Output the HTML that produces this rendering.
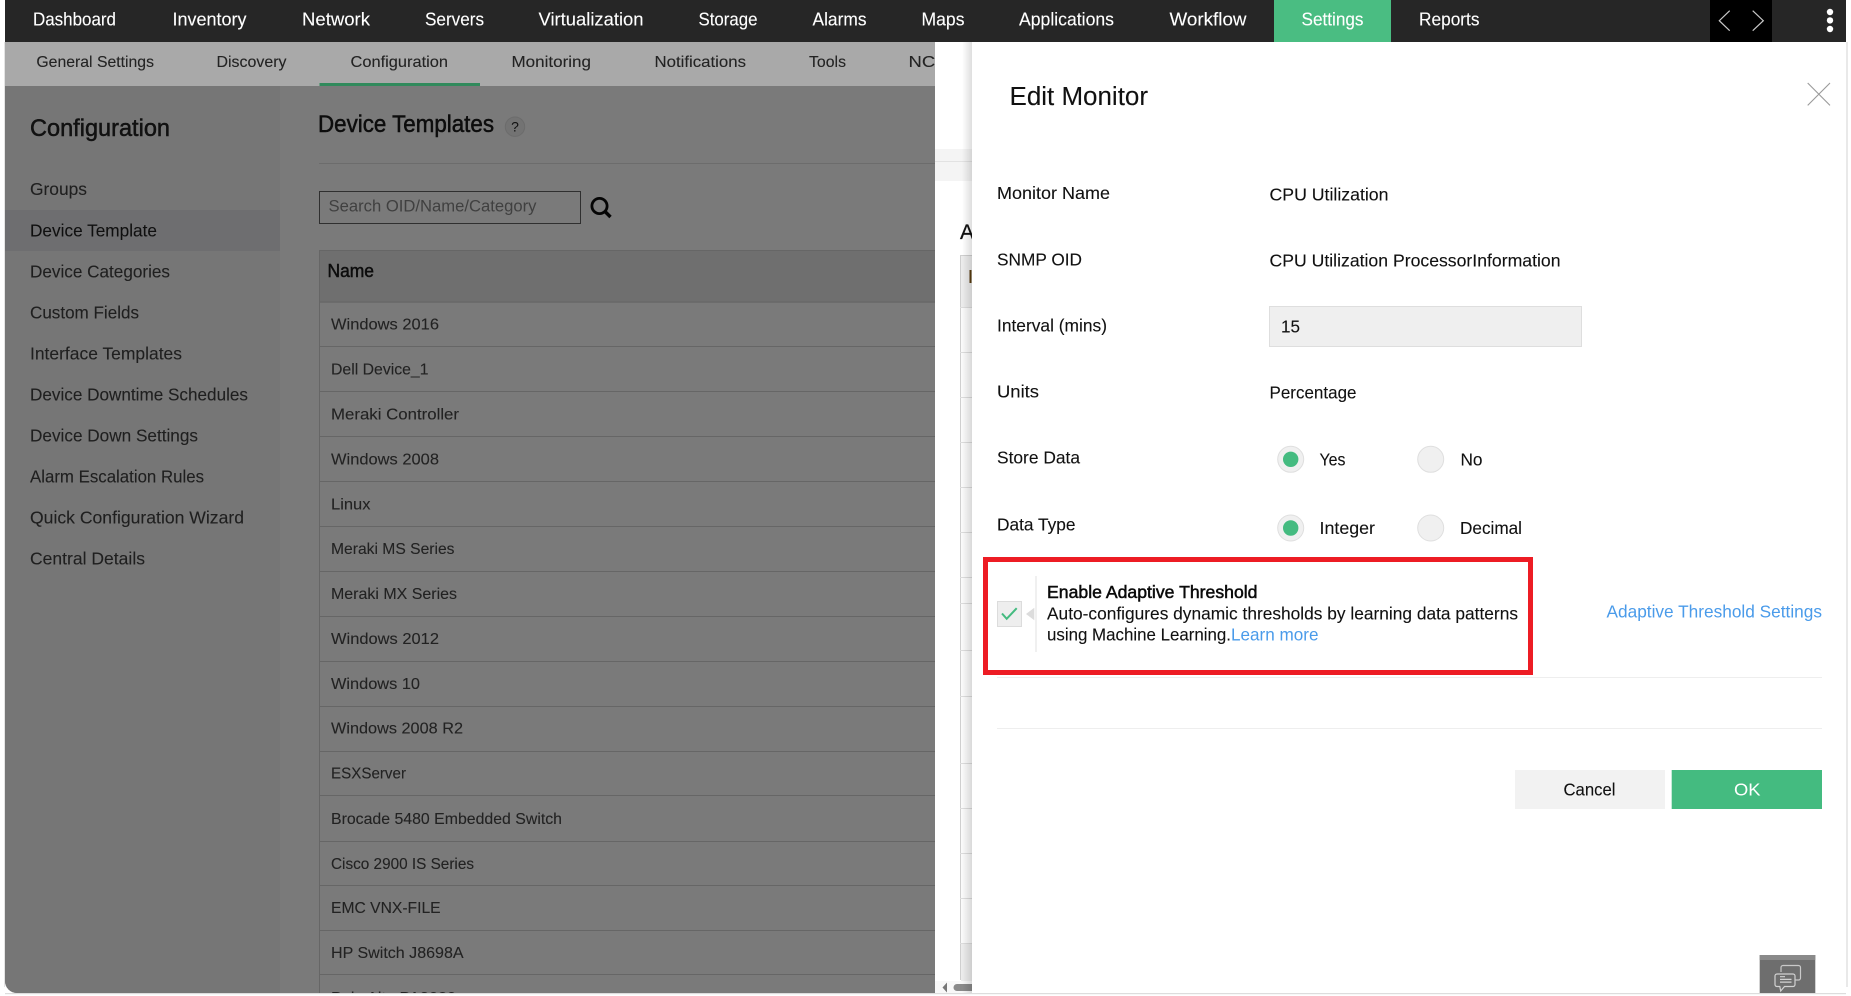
<!DOCTYPE html>
<html><head><meta charset="utf-8"><title>Edit Monitor</title>
<style>
html,body{margin:0;padding:0;width:1851px;height:996px;overflow:hidden;background:#fff}
svg{display:block}
text{font-family:"Liberation Sans",sans-serif}
.n{font-size:18px;fill:#fff;stroke:#fff;stroke-width:.1}
.s{font-size:16px;fill:#232323;stroke:#232323;stroke-width:.1}
.m{font-size:17.8px;fill:#1f1f1f;stroke:#1f1f1f;stroke-width:.1}
.r{font-size:16px;fill:#222;stroke:#222;stroke-width:.1}
.p{font-size:17.8px;fill:#111;stroke:#111;stroke-width:.1}
.a{font-size:17.8px;fill:#4a9bea}
</style></head><body>
<svg xmlns="http://www.w3.org/2000/svg" width="1851" height="996" viewBox="0 0 1851 996">
<defs>
<clipPath id="pg"><path d="M5 0H1846V981a12 12 0 0 1-12 12H17a12 12 0 0 1-12-12Z"/></clipPath>
<linearGradient id="sh" x1="0" x2="1" y1="0" y2="0"><stop offset="0" stop-color="#000" stop-opacity="0"/><stop offset="1" stop-color="#000" stop-opacity=".13"/></linearGradient>
</defs>
<rect x="5" y="993" width="1841" height="1.2" fill="#ddd"/>
<rect x="1846" y="42" width="2" height="945" fill="#e9e9e9"/>
<rect x="4" y="42" width="1" height="945" fill="#e4e4e4"/>
<g clip-path="url(#pg)">
<!-- dimmed page -->
<rect x="5" y="86" width="930" height="910" fill="#7a7a7a"/>
<rect x="5" y="86" width="275" height="910" fill="#767676"/>
<rect x="5" y="210" width="275" height="41" fill="#6e6e70"/>
<!-- top nav -->
<rect x="5" y="0" width="1841" height="42" fill="#262626"/>
<rect x="1274" y="0" width="117" height="42" fill="#4abd82"/>
<rect x="1710" y="0" width="62" height="42" fill="#000"/>
<path d="M1729.7 10.7 1719.3 20.7 1729.7 30.7M1752.7 10.7 1763.3 20.7 1752.7 30.7" fill="none" stroke="#c8c8c8" stroke-width="1.2"/>
<circle cx="1830" cy="12" r="3.2" fill="#fff"/><circle cx="1830" cy="20.4" r="3.2" fill="#fff"/><circle cx="1830" cy="29" r="3.2" fill="#fff"/>
<text class="n" x="33" y="25.5" textLength="83" lengthAdjust="spacingAndGlyphs">Dashboard</text>
<text class="n" x="172.5" y="25.5" textLength="74" lengthAdjust="spacingAndGlyphs">Inventory</text>
<text class="n" x="302" y="25.5" textLength="68" lengthAdjust="spacingAndGlyphs">Network</text>
<text class="n" x="425" y="25.5" textLength="59" lengthAdjust="spacingAndGlyphs">Servers</text>
<text class="n" x="538.5" y="25.5" textLength="105" lengthAdjust="spacingAndGlyphs">Virtualization</text>
<text class="n" x="698.5" y="25.5" textLength="59" lengthAdjust="spacingAndGlyphs">Storage</text>
<text class="n" x="812.5" y="25.5" textLength="54" lengthAdjust="spacingAndGlyphs">Alarms</text>
<text class="n" x="921.5" y="25.5" textLength="43" lengthAdjust="spacingAndGlyphs">Maps</text>
<text class="n" x="1019" y="25.5" textLength="95" lengthAdjust="spacingAndGlyphs">Applications</text>
<text class="n" x="1169.5" y="25.5" textLength="77" lengthAdjust="spacingAndGlyphs">Workflow</text>
<text class="n" x="1301.5" y="25.5" textLength="62" lengthAdjust="spacingAndGlyphs">Settings</text>
<text class="n" x="1419" y="25.5" textLength="60.5" lengthAdjust="spacingAndGlyphs">Reports</text>
<!-- sub nav -->
<rect x="5" y="42" width="930" height="44" fill="#a9a9a9"/>
<rect x="319.5" y="83" width="160.5" height="3" fill="#318a5c"/>
<text class="s" x="36.4" y="67" textLength="117.6" lengthAdjust="spacingAndGlyphs">General Settings</text>
<text class="s" x="216.5" y="67" textLength="70" lengthAdjust="spacingAndGlyphs">Discovery</text>
<text class="s" x="350.5" y="67" textLength="97.5" lengthAdjust="spacingAndGlyphs">Configuration</text>
<text class="s" x="511.5" y="67" textLength="79.5" lengthAdjust="spacingAndGlyphs">Monitoring</text>
<text class="s" x="654.5" y="67" textLength="91.5" lengthAdjust="spacingAndGlyphs">Notifications</text>
<text class="s" x="809" y="67" textLength="37" lengthAdjust="spacingAndGlyphs">Tools</text>
<text class="s" x="908.5" y="67" textLength="42" lengthAdjust="spacingAndGlyphs">NCM</text>
<!-- sidebar -->
<text x="30" y="136" font-size="24" fill="#111" stroke="#111" stroke-width=".5" textLength="140" lengthAdjust="spacingAndGlyphs">Configuration</text>
<text class="m" x="30" y="195" textLength="57" lengthAdjust="spacingAndGlyphs">Groups</text>
<text class="m" x="30" y="236.5" textLength="127" lengthAdjust="spacingAndGlyphs" style="fill:#0f0f0f">Device Template</text>
<text class="m" x="30" y="277.5" textLength="140" lengthAdjust="spacingAndGlyphs">Device Categories</text>
<text class="m" x="30" y="318.5" textLength="109" lengthAdjust="spacingAndGlyphs">Custom Fields</text>
<text class="m" x="30" y="359.5" textLength="152" lengthAdjust="spacingAndGlyphs">Interface Templates</text>
<text class="m" x="30" y="400.5" textLength="218" lengthAdjust="spacingAndGlyphs">Device Downtime Schedules</text>
<text class="m" x="30" y="441.5" textLength="168" lengthAdjust="spacingAndGlyphs">Device Down Settings</text>
<text class="m" x="30" y="482.5" textLength="174" lengthAdjust="spacingAndGlyphs">Alarm Escalation Rules</text>
<text class="m" x="30" y="523.5" textLength="214" lengthAdjust="spacingAndGlyphs">Quick Configuration Wizard</text>
<text class="m" x="30" y="564.5" textLength="115" lengthAdjust="spacingAndGlyphs">Central Details</text>
<!-- main heading -->
<text x="318" y="132" font-size="24" fill="#0d0d0d" stroke="#0d0d0d" stroke-width=".5" textLength="176" lengthAdjust="spacingAndGlyphs">Device Templates</text>
<circle cx="515" cy="126.7" r="9.7" fill="#737373" stroke="#6c6c6c"/>
<text x="515" y="131.5" font-size="14" fill="#111" text-anchor="middle">?</text>
<rect x="319" y="163" width="616" height="1" fill="#6c6c6c"/>
<!-- search -->
<rect x="319.5" y="191.5" width="261" height="32" fill="#7a7a7a" stroke="#2f2f2f"/>
<text x="328.5" y="211.5" font-size="16.5" fill="#404040" textLength="208" lengthAdjust="spacingAndGlyphs">Search OID/Name/Category</text>
<circle cx="599.5" cy="206" r="7.6" fill="none" stroke="#050505" stroke-width="2.8"/>
<path d="M605 211.5 610.5 217" stroke="#050505" stroke-width="3.4" fill="none"/>
<!-- table -->
<rect x="319" y="250" width="616" height="52" fill="#6f6f6f"/>
<rect x="319" y="250" width="616" height="1" fill="#666"/>
<rect x="319" y="250" width="1" height="746" fill="#666"/>
<text x="327.5" y="277" font-size="18" fill="#0d0d0d" stroke="#0d0d0d" stroke-width=".5" textLength="46.5" lengthAdjust="spacingAndGlyphs">Name</text>
<g fill="#666">
<rect x="319" y="301.5" width="616" height="1.2"/><rect x="319" y="346" width="616" height="1"/><rect x="319" y="391" width="616" height="1"/><rect x="319" y="436" width="616" height="1"/><rect x="319" y="481" width="616" height="1"/><rect x="319" y="526" width="616" height="1"/><rect x="319" y="571" width="616" height="1"/><rect x="319" y="616" width="616" height="1"/><rect x="319" y="661" width="616" height="1"/><rect x="319" y="706" width="616" height="1"/><rect x="319" y="751" width="616" height="1"/><rect x="319" y="795" width="616" height="1"/><rect x="319" y="841" width="616" height="1"/><rect x="319" y="885" width="616" height="1"/><rect x="319" y="930" width="616" height="1"/><rect x="319" y="974" width="616" height="1"/>
</g>
<text class="r" x="331" y="329.5" textLength="108" lengthAdjust="spacingAndGlyphs">Windows 2016</text>
<text class="r" x="331" y="374.5" textLength="97.5" lengthAdjust="spacingAndGlyphs">Dell Device_1</text>
<text class="r" x="331" y="419.5" textLength="128" lengthAdjust="spacingAndGlyphs">Meraki Controller</text>
<text class="r" x="331" y="464.5" textLength="108" lengthAdjust="spacingAndGlyphs">Windows 2008</text>
<text class="r" x="331" y="509.5" textLength="39.5" lengthAdjust="spacingAndGlyphs">Linux</text>
<text class="r" x="331" y="554" textLength="123.5" lengthAdjust="spacingAndGlyphs">Meraki MS Series</text>
<text class="r" x="331" y="599" textLength="126" lengthAdjust="spacingAndGlyphs">Meraki MX Series</text>
<text class="r" x="331" y="644" textLength="108" lengthAdjust="spacingAndGlyphs">Windows 2012</text>
<text class="r" x="331" y="689" textLength="89" lengthAdjust="spacingAndGlyphs">Windows 10</text>
<text class="r" x="331" y="733.5" textLength="132" lengthAdjust="spacingAndGlyphs">Windows 2008 R2</text>
<text class="r" x="331" y="778.5" textLength="75" lengthAdjust="spacingAndGlyphs">ESXServer</text>
<text class="r" x="331" y="824" textLength="231" lengthAdjust="spacingAndGlyphs">Brocade 5480 Embedded Switch</text>
<text class="r" x="331" y="869" textLength="143" lengthAdjust="spacingAndGlyphs">Cisco 2900 IS Series</text>
<text class="r" x="331" y="913" textLength="109.6" lengthAdjust="spacingAndGlyphs">EMC VNX-FILE</text>
<text class="r" x="331" y="958" textLength="132.6" lengthAdjust="spacingAndGlyphs">HP Switch J8698A</text>
<text class="r" x="331" y="1003" textLength="125" lengthAdjust="spacingAndGlyphs">Palo Alto PA3020</text>
<!-- white strip under panel -->
<rect x="935" y="42" width="37" height="954" fill="#fff"/>
<rect x="935" y="149" width="37" height="32" fill="#f4f4f4"/>
<rect x="935" y="161" width="37" height="1" fill="#e2e2e2"/>
<text x="960" y="239" font-size="21" fill="#111" stroke="#111" stroke-width=".3">A</text>
<rect x="960.5" y="255" width="12" height="725" fill="#fafafa"/>
<rect x="960.5" y="255" width="12" height="52" fill="#ececec"/>
<rect x="960" y="255" width="12" height="1" fill="#cfcfcf"/>
<rect x="960" y="255" width="1" height="725" fill="#cfcfcf"/>
<rect x="969.5" y="270" width="2" height="13" fill="#5a3d10"/>
<g fill="#dcdcdc"><rect x="960" y="307" width="12" height="1"/><rect x="960" y="352" width="12" height="1"/><rect x="960" y="397" width="12" height="1"/><rect x="960" y="442" width="12" height="1"/><rect x="960" y="487" width="12" height="1"/><rect x="960" y="532" width="12" height="1"/><rect x="960" y="577" width="12" height="1"/><rect x="960" y="603" width="12" height="1"/><rect x="960" y="650" width="12" height="1"/><rect x="960" y="696" width="12" height="1"/><rect x="960" y="763" width="12" height="1"/><rect x="960" y="808" width="12" height="1"/><rect x="960" y="853" width="12" height="1"/><rect x="960" y="898" width="12" height="1"/><rect x="960" y="943" width="12" height="1"/></g>
<rect x="961" y="944" width="11" height="37" fill="#ececec"/>
<rect x="935" y="981" width="37" height="12" fill="#f8f8f8"/>
<path d="M942.5 987.5 947 982.5V992.5Z" fill="#777"/>
<path d="M972 984H957a3.5 3.5 0 0 0 0 7H972Z" fill="#8a8a8a"/>
<rect x="962" y="42" width="10" height="951" fill="url(#sh)"/>
<!-- panel -->
<rect x="972" y="42" width="874" height="951" fill="#fff"/>
<text x="1009.5" y="105" font-size="25.5" fill="#111" stroke="#111" stroke-width=".1" textLength="138.5" lengthAdjust="spacingAndGlyphs">Edit Monitor</text>
<path d="M1807.7 83 1830 105.4M1830 83 1807.7 105.4" stroke="#9a9a9a" stroke-width="1.1" fill="none"/>
<text class="p" x="997" y="199" textLength="113" lengthAdjust="spacingAndGlyphs">Monitor Name</text>
<text class="p" x="997" y="265.5" textLength="85" lengthAdjust="spacingAndGlyphs">SNMP OID</text>
<text class="p" x="997" y="331.5" textLength="110" lengthAdjust="spacingAndGlyphs">Interval (mins)</text>
<text class="p" x="997" y="397.5" textLength="42" lengthAdjust="spacingAndGlyphs">Units</text>
<text class="p" x="997" y="463.5" textLength="83" lengthAdjust="spacingAndGlyphs">Store Data</text>
<text class="p" x="997" y="530.5" textLength="78.5" lengthAdjust="spacingAndGlyphs">Data Type</text>
<text class="p" x="1269.5" y="200.5" textLength="119" lengthAdjust="spacingAndGlyphs">CPU Utilization</text>
<text class="p" x="1269.5" y="266.5" textLength="291" lengthAdjust="spacingAndGlyphs">CPU Utilization ProcessorInformation</text>
<rect x="1269.5" y="306.5" width="312" height="40" fill="#efefef" stroke="#dedede"/>
<text class="p" x="1281" y="332.5" textLength="19" lengthAdjust="spacingAndGlyphs">15</text>
<text class="p" x="1269.5" y="398.5" textLength="87" lengthAdjust="spacingAndGlyphs">Percentage</text>
<g fill="#f0f0f0" stroke="#dfdfdf">
<circle cx="1290.7" cy="459.3" r="13"/><circle cx="1430.7" cy="459.3" r="13"/><circle cx="1290.7" cy="528" r="13"/><circle cx="1430.7" cy="528" r="13"/>
</g>
<circle cx="1290.7" cy="459.3" r="7.7" fill="#44bb80"/><circle cx="1290.7" cy="528" r="7.7" fill="#44bb80"/>
<text class="p" x="1319.5" y="465.5" textLength="26" lengthAdjust="spacingAndGlyphs">Yes</text>
<text class="p" x="1460.5" y="465.5" textLength="22" lengthAdjust="spacingAndGlyphs">No</text>
<text class="p" x="1319.5" y="533.8" textLength="55.5" lengthAdjust="spacingAndGlyphs">Integer</text>
<text class="p" x="1460" y="533.8" textLength="62" lengthAdjust="spacingAndGlyphs">Decimal</text>
<!-- adaptive -->
<rect x="985.5" y="559.5" width="545" height="113" fill="#fff" stroke="#ed1c24" stroke-width="5"/>
<rect x="997.5" y="601.5" width="24" height="25" fill="#eee" stroke="#dcdcdc"/>
<path d="M1002 613.5 1006.7 618.8 1016.7 608.2" fill="none" stroke="#44bb80" stroke-width="2"/>
<path d="M1026 614 1034.3 607.8V620.2Z" fill="#dcdcdc"/>
<rect x="1035.5" y="576" width="1" height="76" fill="#e2e2e2"/>
<text x="1047" y="598" font-size="17.8" fill="#0a0a0a" stroke="#0a0a0a" stroke-width=".5" textLength="210.5" lengthAdjust="spacingAndGlyphs">Enable Adaptive Threshold</text>
<text class="p" x="1047" y="619.5" textLength="471" lengthAdjust="spacingAndGlyphs">Auto-configures dynamic thresholds by learning data patterns</text>
<text class="p" x="1047" y="640.5" textLength="184" lengthAdjust="spacingAndGlyphs">using Machine Learning.</text>
<text class="a" x="1231" y="640.5" textLength="87.5" lengthAdjust="spacingAndGlyphs">Learn more</text>
<text class="a" x="1606.5" y="617.5" textLength="215.5" lengthAdjust="spacingAndGlyphs">Adaptive Threshold Settings</text>
<rect x="997" y="677" width="825" height="1" fill="#eee"/>
<rect x="997" y="728" width="825" height="1" fill="#eee"/>
<rect x="1515" y="770" width="150" height="39" fill="#f2f2f2"/>
<text class="p" x="1563.5" y="795.5" textLength="52" lengthAdjust="spacingAndGlyphs">Cancel</text>
<rect x="1671.7" y="770" width="150.3" height="39" fill="#44bb80"/>
<text x="1734" y="795.5" font-size="17.8" fill="#fff" textLength="26.5" lengthAdjust="spacingAndGlyphs">OK</text>
<!-- chat widget -->
<rect x="1759.7" y="955" width="55.6" height="38" fill="#6e6e6e"/>
<rect x="1759.7" y="955" width="55.6" height="5" fill="#8a8a8a"/>
<path d="M1781 972V967.5a2 2 0 0 1 2-2H1798.5a2 2 0 0 1 2 2V978a2 2 0 0 1-2 2H1795.5" fill="none" stroke="#c9c9c9" stroke-width="1.2"/>
<path d="M1777 974H1793a2 2 0 0 1 2 2V984.5a2 2 0 0 1-2 2H1784.5L1780.7 991 1779.8 986.5H1777a2 2 0 0 1-2-2V976a2 2 0 0 1 2-2Z" fill="#6e6e6e" stroke="#d2d2d2" stroke-width="1.2"/>
<path d="M1780 976.7H1785M1780 979.4H1791.5M1780 982.1H1791.5" stroke="#d2d2d2" stroke-width="1.2" fill="none"/>
</g>
</svg>
</body></html>
